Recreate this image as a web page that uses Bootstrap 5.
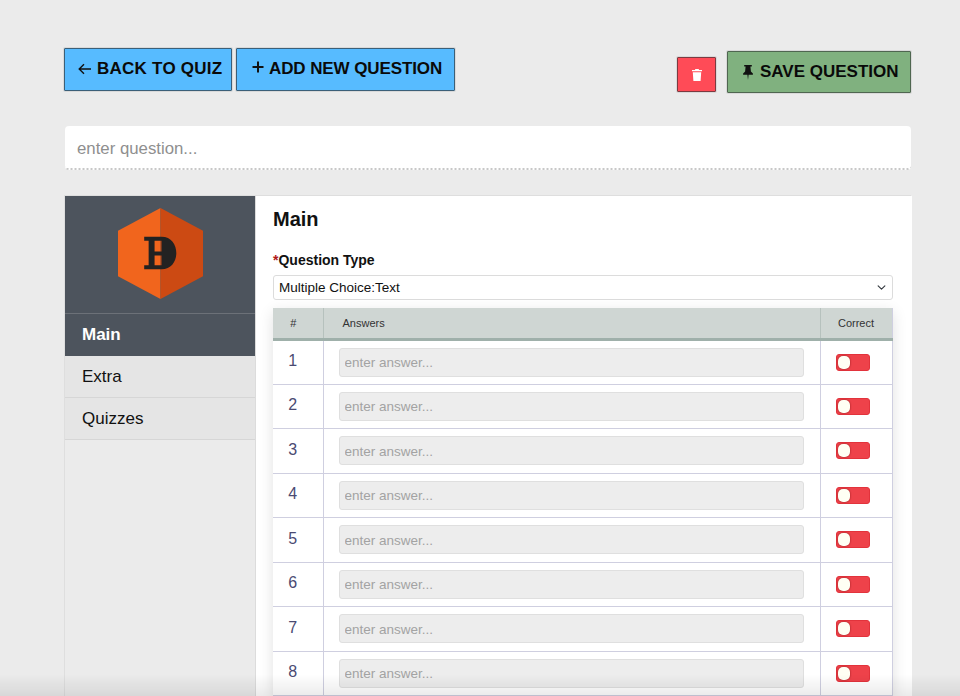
<!DOCTYPE html>
<html lang="en">

<head>
  <meta charset="UTF-8">
  <meta name="viewport" content="width=device-width, initial-scale=1.0">
  <title>Edit Question</title>
  <link href="https://cdn.jsdelivr.net/npm/bootstrap@5.3.2/dist/css/bootstrap.min.css" rel="stylesheet">
  <style>
    html, body {
      height: 696px;
      overflow: hidden;
    }

    body {
      background-color: #ebebeb;
      font-family: "Liberation Sans", Arial, sans-serif;
      color: #111;
    }

    .page-wrap {
      padding: 48px 49px 0 64px;
    }

    .top-bar {
      height: 78px;
    }

    .act-btn {
      display: flex;
      align-items: center;
      gap: 5px;
      font-size: 17px;
      font-weight: 700;
      color: #0a0a0a;
      text-decoration: none;
      border: 1px solid #3b5f78;
      border-radius: 1px;
      box-shadow: 0 0 0 1px #d9d9d9;
    }

    .act-blue {
      background: #57bbff;
      height: 43px;
      padding-bottom: 2px;
    }

    .back-btn {
      width: 168px;
      padding-left: 13px;
      letter-spacing: .25px;
    }

    .add-btn {
      width: 219px;
      padding-left: 15px;
      letter-spacing: -.1px;
    }

    .plus-icon { margin-bottom: 3px; }

    .act-red {
      background: #ff4b57;
      border-color: #7c3a40;
      width: 39px;
      height: 35px;
      margin-top: 9px;
      justify-content: center;
    }

    .act-green {
      background: #80b17f;
      border-color: #4f6650;
      width: 184px;
      height: 42px;
      margin-top: 3px;
      margin-left: 11px;
      padding-left: 15px;
      gap: 7px;
    }

    .question-box {
      margin-left: 1px;
      height: 44px;
      width: 846px;
      background: #fff;
      border: 0;
      border-bottom: 2px dotted #c8c8c8;
      border-radius: 4px;
      padding: 4px 12px 0;
      font-size: 16.8px;
      margin-bottom: 25px;
      display: block;
      outline: none;
    }

    .question-box::placeholder {
      color: #8f8f8f;
      opacity: 1;
    }

    .answer-input::placeholder {
      color: #a3a3a3;
      opacity: 1;
    }

    .editor-panel {
      width: 847px;
      height: 600px;
      border: 1px solid #dedede;
      border-right: 0;
    }

    .side-col {
      width: 191px;
      flex: none;
      border-right: 1px solid #dcdcdc;
    }

    .logo-box {
      height: 118px;
      padding-bottom: 2px;
      background: #4d545d;
      border-bottom: 1px solid #6c7178;
    }

    .side-link {
      height: 42px;
      display: flex;
      align-items: center;
      padding-left: 17px;
      font-size: 17px;
      color: #111;
      background: #e5e5e5;
      border-bottom: 1px solid #d6d6d6;
      text-decoration: none;
    }

    .side-active {
      background: #4d545d;
      color: #fff;
      font-weight: 700;
      border-bottom-color: #4d545d;
    }

    .main-col {
      background: #fff;
      padding: 11px 19px 0 17px;
    }

    .main-title {
      font-size: 20px;
      font-weight: 700;
      line-height: 24px;
      margin-bottom: 20px;
    }

    .type-label {
      font-size: 14px;
      font-weight: 700;
      line-height: 18px;
      margin-bottom: 6px;
      display: block;
    }

    .req-star { color: #b01818; }

    .type-select {
      height: 25px;
      padding: 0 30px 0 5px;
      font-size: 13.5px;
      line-height: 23px;
      color: #111;
      border-color: #dcdcdc;
      border-radius: 3px;
      background-position: right 5px center;
      background-size: 11px 9px;
      margin-bottom: 8px;
    }

    .answer-table {
      table-layout: fixed;
      width: 619px;
      margin: 0;
      box-shadow: 0 4px 14px rgba(0, 0, 0, .12);
      border-collapse: collapse;
    }

    .answer-table th {
      background: #cfd6d3;
      height: 31.5px;
      padding: 0;
      font-size: 11px;
      font-weight: 400;
      color: #333;
      text-align: center;
      vertical-align: middle;
      border-bottom: 3px solid #9fb0aa;
      border-right: 1px solid #b6c1bd;
    }

    .answer-table th.num-head {
      width: 50px;
      padding-right: 9px;
    }

    .answer-table th.ans-head {
      width: 497px;
      text-align: left;
      padding-left: 19px;
    }

    .answer-table th.ok-head {
      width: 72px;
    }

    .answer-table td {
      height: 44.5px;
      padding: 0;
      vertical-align: middle;
      text-align: center;
      border-bottom: 1px solid #cfcfe0;
      border-right: 1px solid #cfcfe0;
      background: #fff;
      font-size: 16px;
      color: #4a4a72;
    }

    .answer-table th:last-child,
    .answer-table td:last-child {
      border-right: 1px solid #cfcfe0;
    }

    .answer-table td.num-cell {
      padding: 0 10px 2px 0;
    }

    .answer-input {
      display: block;
      width: 465px;
      height: 29px;
      margin-left: 15px;
      background: #ededed;
      border: 1px solid #dfdfdf;
      border-radius: 3px;
      padding: 1px 5px 0;
      font-size: 13.5px;
      outline: none;
    }

    .toggle-off {
      display: block;
      position: relative;
      width: 34px;
      height: 17px;
      margin-left: 15px;
      background: #ee424a;
      border: 1px solid #e2333c;
      border-radius: 3px;
    }

    .toggle-off::after {
      content: "";
      position: absolute;
      left: 1px;
      top: 1px;
      width: 12px;
      height: 13px;
      border-radius: 5px;
      background: #fffff4;
      box-shadow: 0 0 2px rgba(90, 0, 0, .7);
    }

    .bottom-fade {
      position: fixed;
      left: 0;
      right: 0;
      bottom: 0;
      height: 22px;
      background: linear-gradient(to bottom, rgba(0, 0, 0, 0), rgba(0, 0, 0, .08));
      pointer-events: none;
    }
  </style>
</head>

<body>
  <div class="page-wrap">
    <div class="top-bar d-flex align-items-start">
      <a class="act-btn act-blue back-btn" role="button">
        <svg width="14" height="12" viewBox="0 0 14 12" fill="none" stroke="#111" stroke-width="1.4"><path d="M13 6H1.5M6 1.2L1.2 6 6 10.8"/></svg>
        BACK TO QUIZ
      </a>
      <a class="act-btn act-blue add-btn ms-1" role="button">
        <svg class="plus-icon" width="12" height="12" viewBox="0 0 12 12" fill="none" stroke="#111" stroke-width="2"><path d="M6 .5v11M.5 6h11"/></svg>
        ADD NEW QUESTION
      </a>
      <a class="act-btn act-red ms-auto" role="button" aria-label="Delete">
        <svg width="10" height="12" viewBox="0 0 10 12" fill="#fff"><path d="M3.4 0h3.2l.5 1H10v1.3H0V1h2.9zM.8 3.2h8.4L8.6 12H1.4z"/></svg>
      </a>
      <a class="act-btn act-green" role="button">
        <svg width="10" height="15" viewBox="0 0 10 15" fill="#111"><path d="M1.2 0h7.6v1.5H7.4l.5 5 2 2v1.2H5.6L5 15l-.6-5.3H.1V8.5l2-2 .5-5H1.2z"/></svg>
        SAVE QUESTION
      </a>
    </div>

    <input class="question-box" type="text" placeholder="enter question...">

    <div class="editor-panel d-flex">
      <div class="side-col">
        <div class="logo-box d-flex align-items-center justify-content-center">
          <svg width="85" height="91" viewBox="0 0 86 92">
            <polygon points="43,0 43,92 0,69 0,23" fill="#f1651d"/>
            <polygon points="43,0 86,23 86,69 43,92" fill="#cc4a13"/>
            <path d="M26.5 29H44C54 29 59 37 59 45.5S54 62 44 62H26.5V58H31V33H26.5ZM37 33H44V44H37ZM37 48H44V58H37Z" fill="#222" fill-rule="evenodd"/>
          </svg>
        </div>
        <a class="side-link side-active">Main</a>
        <a class="side-link">Extra</a>
        <a class="side-link">Quizzes</a>
      </div>

      <div class="main-col flex-grow-1">
        <div class="main-title">Main</div>
        <label class="type-label"><span class="req-star">*</span>Question Type</label>
        <select class="form-select type-select">
          <option>Multiple Choice:Text</option>
        </select>
        <table class="answer-table" id="answers">
          <thead>
            <tr>
              <th class="num-head">#</th>
              <th class="ans-head">Answers</th>
              <th class="ok-head">Correct</th>
            </tr>
          </thead>
          <tbody></tbody>
        </table>
      </div>
    </div>
  </div>
  <div class="bottom-fade"></div>

  <script>
    const body = document.querySelector('#answers tbody');
    for (let i = 1; i <= 8; i++) {
      body.insertAdjacentHTML('beforeend', `
        <tr>
          <td class="num-cell">${i}</td>
          <td><input class="answer-input" type="text" placeholder="enter answer..."></td>
          <td><span class="toggle-off"></span></td>
        </tr>`);
    }
  </script>
  <script src="https://cdn.jsdelivr.net/npm/bootstrap@5.3.2/dist/js/bootstrap.bundle.min.js"></script>
</body>

</html>
